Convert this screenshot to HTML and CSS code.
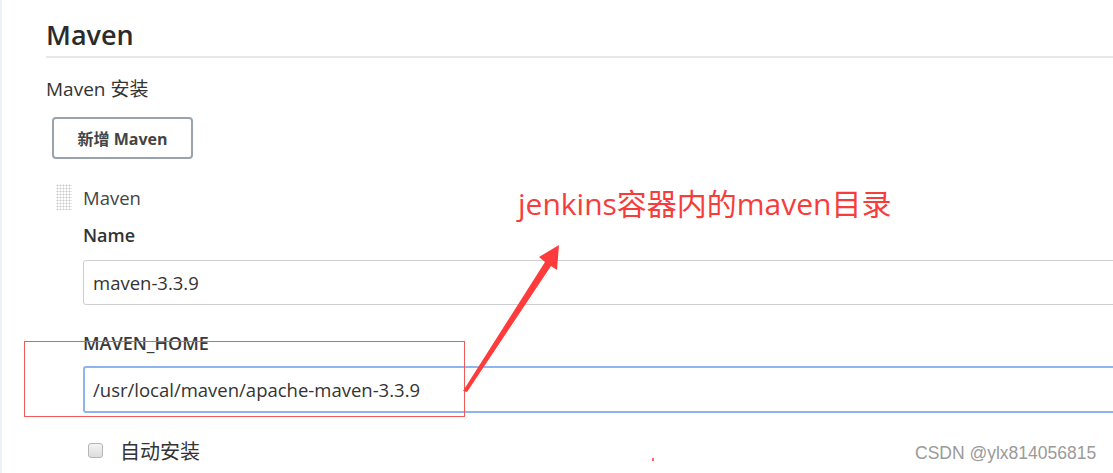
FILE: index.html
```html
<!DOCTYPE html>
<html lang="zh-CN">
<head>
<meta charset="utf-8">
<link rel="stylesheet" href="styles.css">
</head>
<body>
<div class="page">
  <section class="section">
    <h2 class="section-title">Maven</h2>
    <div class="group-label">Maven 安装</div>
    <button class="add-btn" type="button">新增 Maven</button>
    <div class="install">
      <div class="install-head">
        <span class="handle"></span>
        <span class="install-name">Maven</span>
      </div>
      <div class="field">
        <label class="field-label">Name</label>
        <input class="text-input" type="text" value="maven-3.3.9">
      </div>
      <div class="field field-home">
        <label class="field-label">MAVEN_HOME</label>
        <input class="text-input focused" type="text" value="/usr/local/maven/apache-maven-3.3.9">
      </div>
      <div class="check-row">
        <span class="checkbox"></span>
        <span class="check-label">自动安装</span>
      </div>
    </div>
  </section>

  <div class="mark-box"></div>
  <svg class="arrow" width="1113" height="473" viewBox="0 0 1113 473">
    <polygon points="463,391 545,262 539,257 559,245 557,270 551,266 467,392" fill="#ff3b3b"/>
  </svg>
  <div class="note">jenkins容器内的maven目录</div>
  <div class="watermark">CSDN @ylx814056815</div>
  <span class="dot"></span>
</div>
</body>
</html>
```
FILE: styles.css
```css
html, body {
  margin: 0;
  padding: 0;
  background: #fff;
}
body {
  font-family: "Open Sans", "Noto Sans CJK SC", sans-serif;
  color: #333;
  width: 1113px;
  height: 473px;
  overflow: hidden;
}
.page {
  position: relative;
  width: 1113px;
  height: 473px;
  border-left: 2px solid #eef2f7;
  box-sizing: border-box;
}
.section {
  padding-left: 44px;
  padding-top: 15px;
}
.section-title {
  margin: 0;
  font-size: 27px;
  font-weight: 600;
  line-height: 40px;
  color: #2b2b2b;
  border-bottom: 2px solid #e8e8e8;
  padding-bottom: 1px;
}
.group-label {
  margin-top: 19px;
  font-size: 19px;
  line-height: 24px;
  color: #333;
}
.add-btn {
  display: block;
  margin: 16px 0 0 6px;
  width: 141px;
  height: 42px;
  border: 2px solid #9aa3ab;
  border-radius: 4px;
  background: #fff;
  font-family: "Open Sans", "Noto Sans CJK SC", sans-serif;
  font-size: 16px;
  font-weight: 700;
  color: #444;
  padding: 0;
}
.install {
  padding-left: 10px;
}
.install-head {
  display: flex;
  align-items: center;
  margin-top: 25px;
  height: 26px;
}
.handle {
  width: 16px;
  height: 26px;
  margin-right: 11px;
  background-image: radial-gradient(circle, #c9c9c9 0.9px, transparent 1.1px);
  background-size: 3px 3px;
}
.install-name {
  font-size: 18.5px;
  color: #444;
}
.field {
  padding-left: 27px;
}
.field-label {
  display: block;
  margin-top: 13px;
  font-size: 18px;
  font-weight: 600;
  line-height: 24px;
  color: #333;
}
.text-input {
  display: block;
  box-sizing: border-box;
  margin-top: 13px;
  width: 1060px;
  height: 45px;
  border: 1px solid #cfcfcf;
  border-radius: 3px;
  padding: 0 0 0 9px;
  font-family: "Open Sans", "Noto Sans CJK SC", sans-serif;
  font-size: 18.5px;
  color: #333;
  background: #fff;
  outline: none;
}
.field-home .field-label {
  margin-top: 26px;
  font-size: 18px;
  font-weight: 600;
  color: #3a3a3a;
}
.text-input.focused {
  height: 47px;
  border: 2px solid #8fb4f2;
  padding-left: 8px;
  margin-top: 11px;
}
.check-row {
  display: flex;
  align-items: center;
  margin: 23px 0 0 32px;
}
.checkbox {
  width: 13px;
  height: 13px;
  border: 1px solid #b5b5b5;
  border-radius: 3px;
  background: linear-gradient(#f4f4f4, #dcdcdc);
}
.check-label {
  margin-left: 17px;
  font-size: 20px;
  color: #333;
}
.mark-box {
  position: absolute;
  left: 22px;
  top: 341px;
  width: 441px;
  height: 76px;
  border: 1px solid #f25a5a;
  box-sizing: border-box;
}
.arrow {
  position: absolute;
  left: -2px;
  top: 0;
}
.note {
  position: absolute;
  left: 516px;
  top: 184px;
  font-size: 30px;
  line-height: 40px;
  color: #f73c3c;
  white-space: nowrap;
}
.watermark {
  position: absolute;
  left: 913px;
  top: 441px;
  font-family: "Liberation Sans", sans-serif;
  font-size: 17.5px;
  line-height: 24px;
  color: #9a9a9a;
}
.dot {
  position: absolute;
  left: 650px;
  top: 458px;
  width: 2px;
  height: 3px;
  background: #f66;
}
```
